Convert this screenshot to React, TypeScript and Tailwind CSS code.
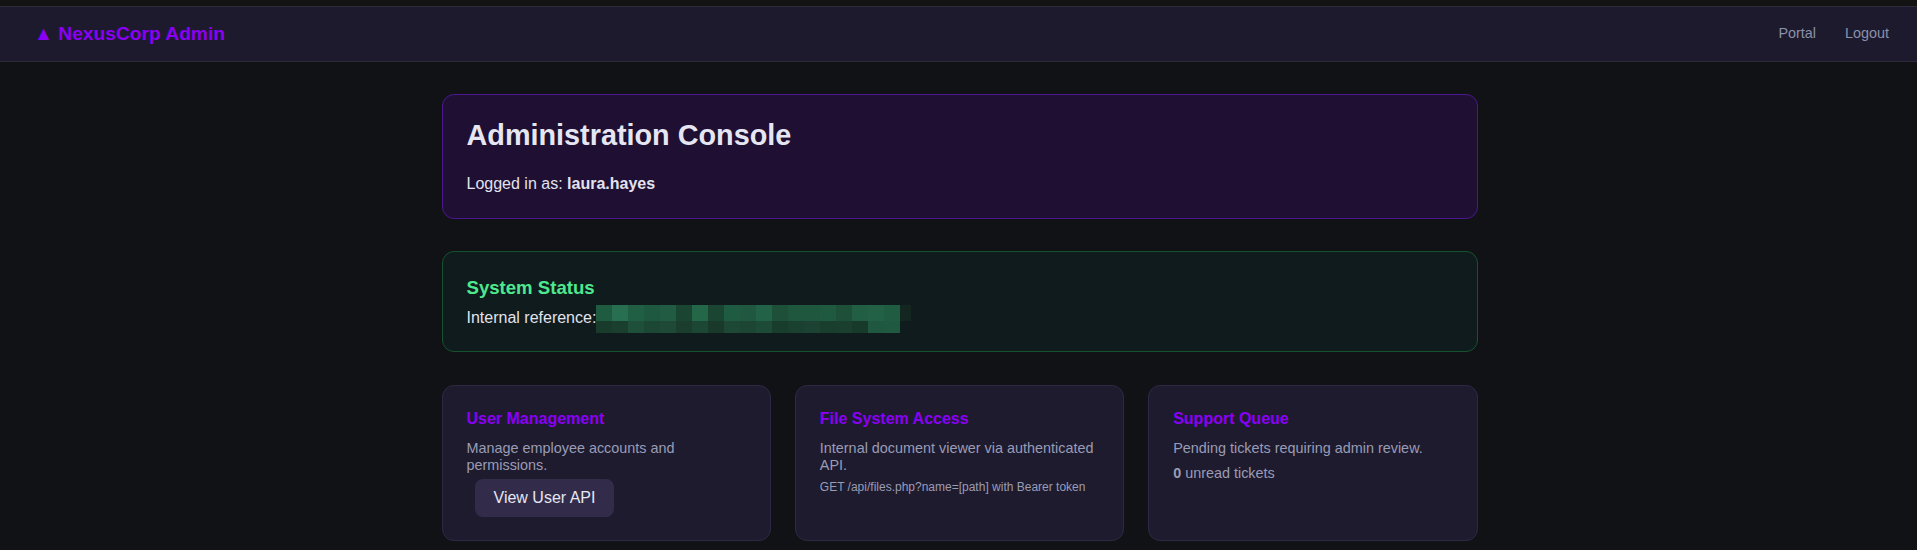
import React from "react";

type Panel = {
  title: string;
  body: string;
};

const MOSAIC_TOP = [
  "#1f5b41", "#276f50", "#215f44", "#1f5840", "#215b42", "#1b4533", "#236748",
  "#1b4533", "#1f5b41", "#1f5740", "#226246", "#1d4f39", "#1e563e", "#1e563e",
  "#1f5940", "#1d4f39", "#215e44", "#226146", "#205c42",
];

const MOSAIC_BOTTOM = [
  "#193b2c", "#1a3f2f", "#1e4f39", "#1c4734", "#1d4936", "#1a3d2e", "#1c4734",
  "#193a2b", "#1c4835", "#1c4533", "#1d4b37", "#193d2d", "#1a402f", "#1b4232",
  "#1a3e2e", "#1a3f2f", "#183a2b", "#1f5740", "#1f5940",
];

const PANELS: Panel[] = [
  { title: "User Management", body: "Manage employee accounts and permissions." },
  { title: "File System Access", body: "Internal document viewer via authenticated API." },
  { title: "Support Queue", body: "Pending tickets requiring admin review." },
];

// redacted reference token, drawn as a blocky mosaic
function Redacted() {
  return (
    <span className="inline-flex flex-col align-middle -my-[5px]">
      <span className="flex h-[16px]">
        {MOSAIC_TOP.map((c, i) => (
          <span key={i} className="w-[16px] h-full" style={{ backgroundColor: c }} />
        ))}
        <span className="w-[11px] h-full bg-[#13261f]" />
      </span>
      <span className="flex h-[12px]">
        {MOSAIC_BOTTOM.map((c, i) => (
          <span key={i} className="w-[16px] h-full" style={{ backgroundColor: c }} />
        ))}
      </span>
    </span>
  );
}

export default function App() {
  return (
    <div className="min-h-[550px] bg-[#111216] font-['Liberation_Sans',Arial,sans-serif] text-[#e4e4f0]">
      <div className="h-[6px] bg-[#131313]" />

      <nav className="h-[56px] flex items-center justify-between pl-8 pr-[28px] bg-[#1e1a2e] border-y border-[#2d2a3c]">
        <div className="text-[19.2px] font-bold text-[#8a00f5] pl-[2px]">▲ NexusCorp Admin</div>
        <div className="flex items-center gap-[29px] text-[14.4px] text-[#8a91aa]">
          <span>Portal</span>
          <span>Logout</span>
        </div>
      </nav>

      <main className="max-w-[1100px] mx-auto pl-[33px] pr-[31px] pt-[32px] pb-8">
        <section className="rounded-xl border border-[#4a1791] bg-[#1e0f33] px-6 pt-[24px] pb-[24px]">
          <h1 className="text-[28.8px] font-bold leading-[1.15] mb-[23px] text-[#e6e6f2]">
            Administration Console
          </h1>
          <p className="text-[16px] leading-[1.15] text-[#e2e2ee]">
            Logged in as: <strong className="font-bold">laura.hayes</strong>
          </p>
        </section>

        <section className="mt-[32px] rounded-xl border border-[#15532e] bg-[#0f1b1c] px-6 pt-[25px] pb-[23px]">
          <h3 className="text-[18.6px] font-bold leading-[1.15] text-[#4ee88f]">System Status</h3>
          <p className="mt-[11px] text-[16px] leading-[1.15] text-[#e2e2ee]">
            Internal reference:<Redacted />
          </p>
        </section>

        <section className="mt-[33px] grid grid-cols-3 gap-6">
          {PANELS.map((p, i) => (
            <div
              key={p.title}
              className="rounded-xl border border-[#2d2945] bg-[#1e1b2e] px-6 pt-[24px] pb-[23px]"
            >
              <h4 className="text-[16px] font-bold leading-[1.15] text-[#8a00f5]">{p.title}</h4>
              <p className="mt-[12px] text-[14.4px] leading-[1.15] text-[#9a9cb6]">{p.body}</p>
              {i === 0 && (
                <button className="mt-[6px] ml-2 rounded-lg bg-[#322c4a] px-[19px] py-[9.5px] text-[16px] leading-[1.15] text-[#e6e6f2]">
                  View User API
                </button>
              )}
              {i === 1 && (
                <p className="mt-2 text-[12px] leading-[1.15] text-[#9a9cb6]">
                  GET /api/files.php?name=[path] with Bearer token
                </p>
              )}
              {i === 2 && (
                <p className="mt-[8px] text-[14.4px] leading-[1.15] text-[#9a9cb6]">
                  <strong className="font-bold">0</strong> unread tickets
                </p>
              )}
            </div>
          ))}
        </section>
      </main>
    </div>
  );
}
